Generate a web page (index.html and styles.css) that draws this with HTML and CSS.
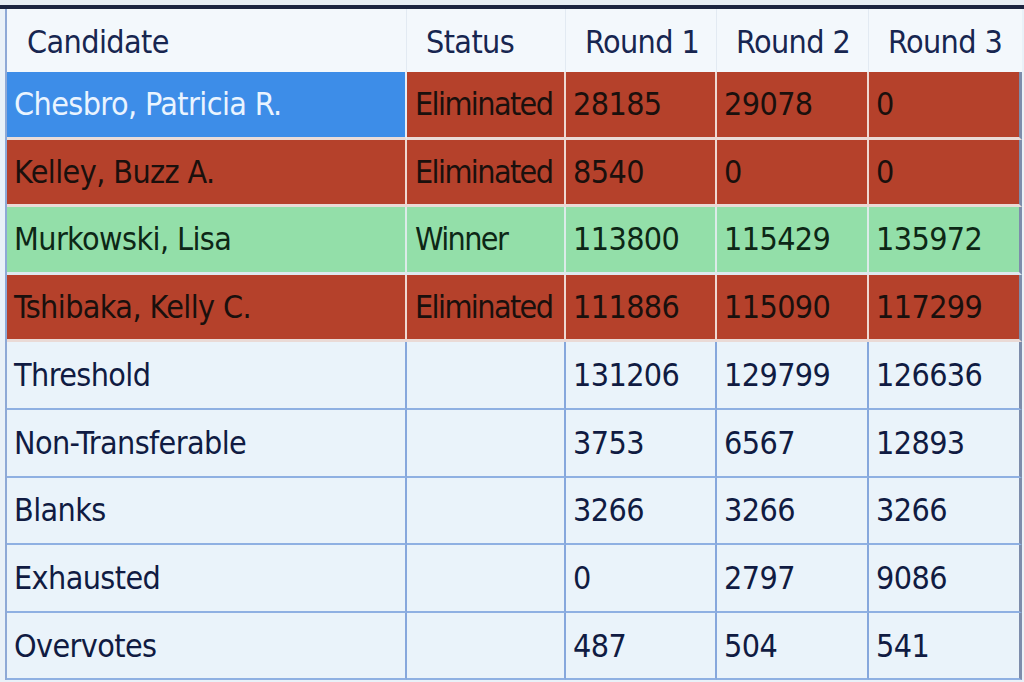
FILE: index.html
```html
<!DOCTYPE html>
<html>
<head>
<meta charset="utf-8">
<link rel="stylesheet" href="styles.css">
</head>
<body>
<div class="screen">
  <div class="topbar"></div>
  <div class="grid">
    <div class="cell head first">Candidate</div>
    <div class="cell head">Status</div>
    <div class="cell head">Round 1</div>
    <div class="cell head">Round 2</div>
    <div class="cell head last">Round 3</div>

    <div class="cell sel">Chesbro, Patricia R.</div>
    <div class="cell red status">Eliminated</div>
    <div class="cell red">28185</div>
    <div class="cell red">29078</div>
    <div class="cell red last">0</div>

    <div class="cell red">Kelley, Buzz A.</div>
    <div class="cell red status">Eliminated</div>
    <div class="cell red">8540</div>
    <div class="cell red">0</div>
    <div class="cell red last">0</div>

    <div class="cell green">Murkowski, Lisa</div>
    <div class="cell green status">Winner</div>
    <div class="cell green">113800</div>
    <div class="cell green">115429</div>
    <div class="cell green last">135972</div>

    <div class="cell red">Tshibaka, Kelly C.</div>
    <div class="cell red status">Eliminated</div>
    <div class="cell red">111886</div>
    <div class="cell red">115090</div>
    <div class="cell red last">117299</div>

    <div class="cell plain">Threshold</div>
    <div class="cell plain"></div>
    <div class="cell plain">131206</div>
    <div class="cell plain">129799</div>
    <div class="cell plain last">126636</div>

    <div class="cell plain">Non-Transferable</div>
    <div class="cell plain"></div>
    <div class="cell plain">3753</div>
    <div class="cell plain">6567</div>
    <div class="cell plain last">12893</div>

    <div class="cell plain">Blanks</div>
    <div class="cell plain"></div>
    <div class="cell plain">3266</div>
    <div class="cell plain">3266</div>
    <div class="cell plain last">3266</div>

    <div class="cell plain">Exhausted</div>
    <div class="cell plain"></div>
    <div class="cell plain">0</div>
    <div class="cell plain">2797</div>
    <div class="cell plain last">9086</div>

    <div class="cell plain">Overvotes</div>
    <div class="cell plain"></div>
    <div class="cell plain">487</div>
    <div class="cell plain">504</div>
    <div class="cell plain last">541</div>
  </div>
</div>
</body>
</html>
```

FILE: styles.css
```css
html, body {
  margin: 0;
  padding: 0;
  background: #dfe7f0;
}
.screen {
  width: 1024px;
  height: 682px;
  overflow: hidden;
  background: #e9f1f8;
  font-family: "DejaVu Sans Condensed", "DejaVu Sans", sans-serif;
}
.topbar {
  height: 5px;
  background: #e6edf4;
  border-bottom: 4px solid #1b2440;
}
.grid {
  display: grid;
  grid-template-columns: 400px 159px 151px 152px 153px;
  grid-template-rows: 63px repeat(9, 67.6px);
  margin-left: 5px;
  border-left: 2px solid #8ea9d6;
}
.cell {
  display: flex;
  align-items: center;
  padding-left: 7px;
  font-size: 32px;
  letter-spacing: -0.6px;
  box-sizing: border-box;
  white-space: nowrap;
  overflow: hidden;
}
.status {
  padding-left: 8px;
  letter-spacing: -1.6px;
}
.head {
  background: #f3f8fc;
  color: #172650;
  padding-left: 19px;
  padding-top: 2px;
  border-right: 1px solid #e2eaf2;
}
.head.first {
  padding-left: 20px;
}
.sel {
  background: #3d8de8;
  color: #eaf4ff;
  border-right: 2px solid #e9eef6;
  border-bottom: 3px solid #eadcd8;
}
.red {
  background: #b5412b;
  color: #1a100d;
  border-right: 2px solid #eed8d2;
  border-bottom: 3px solid #eadad6;
}
.green {
  background: #93dfa9;
  color: #0d2716;
  border-right: 2px solid #dcebe8;
  border-bottom: 3px solid #dfe9ee;
}
.plain {
  background: #eaf3fa;
  color: #101b42;
  border-right: 2px solid #86a7dc;
  border-bottom: 2px solid #8fb0e2;
}
.last.red, .last.green, .last.plain, .last.sel {
  border-right: 3px solid #7d8cab;
}
.head.last {
  border-right: none;
}
```
